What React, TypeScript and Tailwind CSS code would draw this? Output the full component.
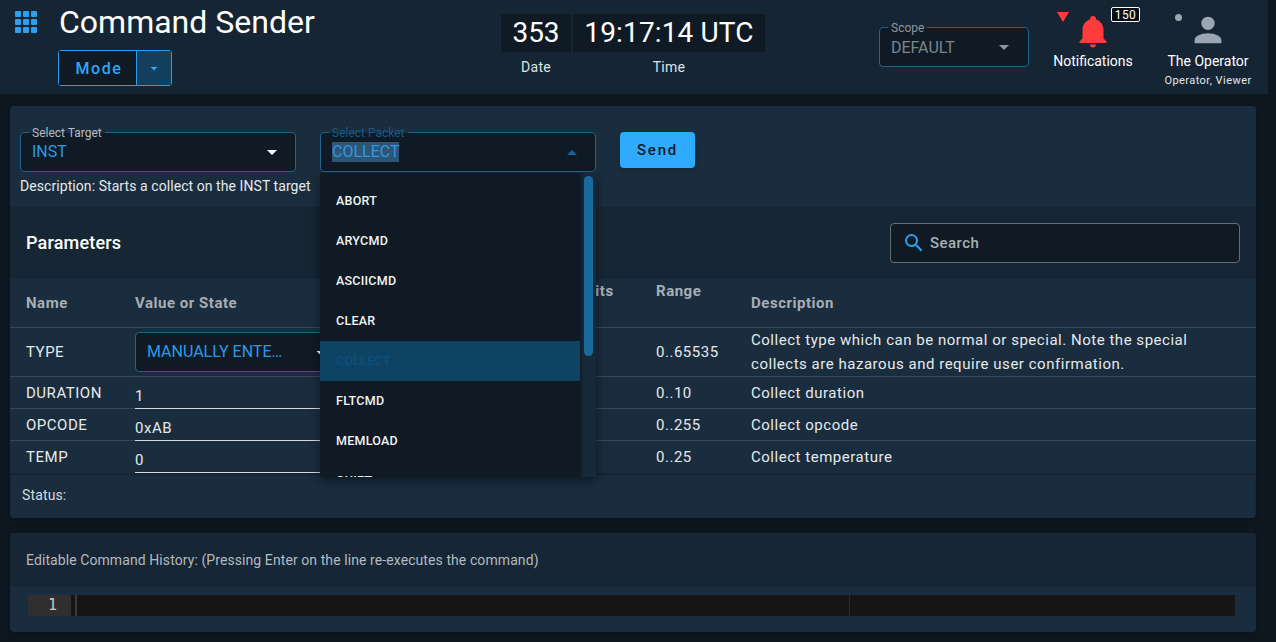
const packets = ['ABORT', 'ARYCMD', 'ASCIICMD', 'CLEAR', 'COLLECT', 'FLTCMD', 'MEMLOAD', 'QUIET'];

const rows = [
  { name: 'DURATION', value: '1', range: '0..10', desc: 'Collect duration' },
  { name: 'OPCODE', value: '0xAB', range: '0..255', desc: 'Collect opcode' },
  { name: 'TEMP', value: '0', range: '0..25', desc: 'Collect temperature' },
];

const rowGrid = 'grid grid-cols-[109px_441px_80px_95px_521px]';

function Icon({ d, className }: { d: string; className: string }) {
  return (
    <svg viewBox="0 0 24 24" className={className} fill="currentColor">
      <path d={d} />
    </svg>
  );
}

function Caret({ up, className }: { up?: boolean; className: string }) {
  return (
    <svg viewBox="0 0 10 5" className={`h-[5px] w-[10px] ${className}`} fill="currentColor">
      <path d={up ? 'M0 5L5 0L10 5Z' : 'M0 0L5 5L10 0Z'} />
    </svg>
  );
}

function OutlinedSelect({ label, value, up, selected }: { label: string; value: string; up?: boolean; selected?: boolean }) {
  return (
    <div className="relative flex h-10 w-[276px] items-center justify-between rounded border border-[#1f6496] bg-[#0f1a24] pl-[11px] pr-[18px]">
      <span className={`absolute -top-[6px] left-[8px] bg-gradient-to-b from-[#1a2d3e] from-50% to-[#0f1a24] to-50% px-[3px] text-[12px] leading-[13px] ${up ? 'text-[#125a8c]' : 'text-[#b4bcc3]'}`}>
        {label}
      </span>
      <span className={`mt-[-1px] text-[16px] leading-[20px] text-[#2b9ae6] ${selected ? 'bg-[#2f5474]' : ''}`}>{value}</span>
      <Caret up={up} className={up ? 'text-[#15659c]' : 'text-white'} />
    </div>
  );
}

export default function App() {
  return (
    <div className="flex h-[642px] w-[1276px] overflow-hidden bg-[#0e1720] text-white [font-family:Roboto,sans-serif]">
      <div className="flex w-[1268px] flex-col">
        <header className="grid h-[94px] grid-cols-[1fr_auto_1fr] bg-[#152534]">
          <div className="flex pl-[15px] pt-[11px]">
            <svg viewBox="0 0 22 22" className="h-[22px] w-[22px] text-[#2d9fef]" fill="currentColor">
              {[0, 8, 16].map((y) =>
                [0, 8, 16].map((x) => <rect key={`${x}-${y}`} x={x} y={y} width="6" height="6" rx="1" />),
              )}
            </svg>
            <div className="ml-[21px] flex flex-col items-start">
              <h1 className="ml-px mt-[-11px] text-[32px] leading-[44px] text-white">Command Sender</h1>
              <div className="mt-[6px] flex h-9 w-[114px] rounded-[3px] border border-[#2b9cf0]">
                <div className="flex w-[77px] items-center justify-center bg-[#0f1a24] pl-[3px] pt-px text-[16px] font-medium tracking-[0.1em] text-[#2ea6f8]">
                  Mode
                </div>
                <div className="flex flex-1 items-center justify-center border-l border-[#2b9cf0] bg-[#14405e]">
                  <Caret className="scale-75 text-[#2ea6f8]" />
                </div>
              </div>
            </div>
          </div>

          <div className="mr-[2px] flex flex-col pt-[14px]">
            <div className="flex gap-[2px]">
              <div className="flex h-[38px] w-[70px] items-center justify-center bg-[#0f1a24] text-[28px]">353</div>
              <div className="flex h-[38px] w-[192px] items-center justify-center bg-[#0f1a24] text-[28px] tracking-[0.005em]">19:17:14 UTC</div>
            </div>
            <div className="mt-[6px] flex gap-[2px] text-[14px] leading-[18px] tracking-[0.02em] text-[#dfe3e6]">
              <span className="w-[70px] text-center">Date</span>
              <span className="w-[192px] text-center">Time</span>
            </div>
          </div>

          <div className="flex justify-end pr-[16px]">
            <div className="relative mt-[27px] flex h-10 w-[150px] items-center justify-between rounded border border-[#1f6496] bg-[#0f1a24] pl-[11px] pr-[19px]">
              <span className="absolute -top-[6px] left-[8px] bg-gradient-to-b from-[#152534] from-50% to-[#0f1a24] to-50% px-[3px] text-[12px] leading-[13px] text-[#8d969e]">
                Scope
              </span>
              <span className="mt-px text-[16px] leading-[20px] text-[#7d868e]">DEFAULT</span>
              <Caret className="text-[#8d969e]" />
            </div>

            <div className="relative ml-[23px] flex w-[82px] flex-col items-center pt-[13px]">
              <span className="absolute left-[5px] top-[12px] h-0 w-0 border-x-[6px] border-t-[10px] border-x-transparent border-t-[#ff3b3b]" />
              <Icon
                className="h-9 w-9 text-[#ff3b3b]"
                d="M21,19V20H3V19L5,17V11C5,7.9 7.03,5.17 10,4.29C10,4.19 10,4.1 10,4A2,2 0 0,1 12,2A2,2 0 0,1 14,4C14,4.1 14,4.19 14,4.29C16.97,5.17 19,7.9 19,11V17L21,19M14,21A2,2 0 0,1 12,23A2,2 0 0,1 10,21"
              />
              <span className="absolute left-[59px] top-[7px] flex h-[15px] w-[29px] items-center justify-center rounded-[2px] border border-white bg-[#0b0f13] text-[12px] leading-none tracking-[0.03em]">
                150
              </span>
              <span className="mt-[2px] whitespace-nowrap text-[14px] leading-[20px] text-white">Notifications</span>
            </div>

            <div className="relative ml-[30px] flex w-[88px] flex-col items-center pt-[10px]">
              <span className="absolute left-[11px] top-[14px] h-[7px] w-[7px] rounded-full bg-[#9ca6b2]" />
              <Icon
                className="h-10 w-10 text-[#9ca6b2]"
                d="M12,4A4,4 0 0,1 16,8A4,4 0 0,1 12,12A4,4 0 0,1 8,8A4,4 0 0,1 12,4M12,14C16.42,14 20,15.79 20,18V20H4V18C4,15.79 7.58,14 12,14Z"
              />
              <span className="mt-[1px] whitespace-nowrap text-[14px] leading-[20px] text-white">The Operator</span>
              <span className="mt-[1px] whitespace-nowrap text-[11px] leading-[18px] tracking-[0.04em] text-[#e4e7ea]">Operator, Viewer</span>
            </div>
          </div>
        </header>

        <main className="flex flex-col gap-[15px] pl-[10px] pr-[12px] pt-[12px]">
          <section className="rounded bg-[#1a2d3e] shadow-md">
            <div className="h-[101px] px-[10px] pt-[26px]">
              <div className="flex">
                <OutlinedSelect label="Select Target" value="INST" />
                <div className="relative ml-[24px]">
                  <OutlinedSelect label="Select Packet" value="COLLECT" up selected />
                  <div className="absolute left-0 top-[41px] z-10 h-[304px] w-[276px] overflow-hidden bg-[#182a3a] shadow-[0_4px_10px_rgba(0,0,0,0.45)]">
                    <div className="h-full w-[260px] bg-[#0f1a24] pt-2 shadow-[2px_0_4px_rgba(0,0,0,0.35)]">
                      {packets.map((p) => (
                        <div
                          key={p}
                          className={`flex h-10 items-center pl-4 text-[12.5px] font-medium tracking-[0.02em] ${p === 'COLLECT' ? 'bg-[#0f4364] text-[#0c4f7e]' : 'text-[#f2f4f5]'}`}
                        >
                          {p}
                        </div>
                      ))}
                    </div>
                    <div className="absolute left-[264px] top-[3px] h-[180px] w-[9px] rounded-full bg-[#1b6a9f]" />
                  </div>
                </div>
                <button className="ml-[24px] h-9 w-[75px] rounded-[4px] bg-[#2eaaff] pt-px text-[15px] font-medium tracking-[0.12em] text-[#0f1a24] shadow-md">
                  Send
                </button>
              </div>
              <p className="mt-[6px] text-[14px] leading-[17px] tracking-[0.005em] text-[#e6e9eb]">Description: Starts a collect on the INST target</p>
            </div>

            <div className="flex h-[72px] items-center justify-between bg-[#162634] pl-4 pr-4">
              <h2 className="-mt-px text-[18px] font-medium tracking-[0.01em] text-white">Parameters</h2>
              <div className="flex h-10 w-[350px] items-center gap-[4px] rounded border border-[#626e79] bg-[#0f1a24] pl-[11px]">
                <Icon
                  className="h-[24px] w-[24px] text-[#2d9fef]"
                  d="M9.5,3A6.5,6.5 0 0,1 16,9.5C16,11.11 15.41,12.59 14.44,13.73L14.71,14H15.5L20.5,19L19,20.5L14,15.5V14.71L13.73,14.44C12.59,15.41 11.11,16 9.5,16A6.5,6.5 0 0,1 3,9.5A6.5,6.5 0 0,1 9.5,3M9.5,5C7,5 5,7 5,9.5C5,12 7,14 9.5,14C12,14 14,12 14,9.5C14,7 12,5 9.5,5Z"
                />
                <span className="text-[15px] font-medium tracking-[0.03em] text-[#a7afb6]">Search</span>
              </div>
            </div>

            <div className={`${rowGrid} h-[49px] border-b border-[#33495a] text-[15px] font-bold tracking-[0.035em] text-[#a7afb6]`}>
              <div className="pl-4 pt-[13px]">Name</div>
              <div className="pl-4 pt-[13px]">Value or State</div>
              <div className="pl-4 pt-px">Units</div>
              <div className="pl-4 pt-px">Range</div>
              <div className="pl-4 pt-[13px]">Description</div>
            </div>

            <div className="text-[15px] tracking-[0.035em] text-[#e6e9eb]">
              <div className={`${rowGrid} h-[49px] border-b border-[#33495a]`}>
                <div className="pl-4 pt-[13px]">TYPE</div>
                <div className="pl-4 pt-[4px]">
                  <div className="flex h-10 w-[240px] items-center rounded border border-[#1f6496] bg-[#0f1a24] pl-[11px] tracking-normal">
                    <span className="w-[136px] whitespace-nowrap text-[16px] leading-[20px] text-[#2b9ae6]">MANUALLY ENTE…</span>
                    <Caret className="ml-[32px] scale-75 text-white" />
                  </div>
                </div>
                <div />
                <div className="pl-4 pt-[13px]">0..65535</div>
                <div className="pl-4 pr-[40px] leading-[24px]">
                  Collect type which can be normal or special. Note the special collects are hazarous and require user confirmation.
                </div>
              </div>
              {rows.map((r, i) => (
                <div key={r.name} className={`${rowGrid} h-[32px] ${i < rows.length - 1 ? 'border-b border-[#33495a]' : ''}`}>
                  <div className="pl-4 pt-[5px]">{r.name}</div>
                  <div className="pl-4">
                    <div className="h-[32px] w-[300px] border-b border-[#d5d9dc] pt-[8px]">{r.value}</div>
                  </div>
                  <div />
                  <div className="pl-4 pt-[5px]">{r.range}</div>
                  <div className="pl-4 pt-[5px]">{r.desc}</div>
                </div>
              ))}
            </div>

            <div className="h-[45px] pl-3 pt-[12px] text-[14px] tracking-[0.01em] text-[#d5dade] shadow-[inset_0_2px_2px_rgba(0,0,0,0.2)]">Status:</div>
          </section>

          <section className="h-[99px] rounded bg-[#1a2d3e] shadow-md">
            <div className="flex h-[54px] items-center rounded-t bg-[#162634] pl-4 pt-px text-[14px] tracking-[0.006em] text-[#b3bac0]">
              Editable Command History: (Pressing Enter on the line re-executes the command)
            </div>
            <div className="ml-[18px] mt-[8px] flex h-[21px] w-[1207px] bg-[#151515]">
              <div className="flex w-[43px] items-center justify-end bg-[#2f2f2f] pr-[14px] text-[15px] text-[#c9c9c9] [font-family:'DejaVu_Sans_Mono',monospace]">
                1
              </div>
              <div className="ml-[4px] w-[2px] bg-[#3a3a3a]" />
              <div className="ml-[772px] w-px bg-[#2b2b2b]" />
            </div>
          </section>
        </main>
      </div>
    </div>
  );
}
